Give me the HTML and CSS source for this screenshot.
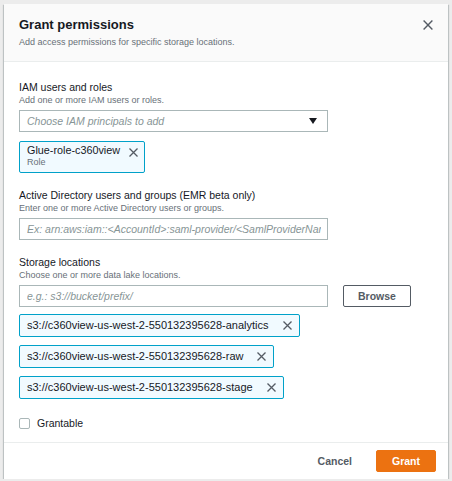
FILE: index.html
```html
<!DOCTYPE html>
<html>
<head>
<meta charset="utf-8">
<link rel="stylesheet" href="styles.css">
</head>
<body>
<div class="modal">
  <div class="modal-header">
    <div class="header-text">
      <h2 class="title">Grant permissions</h2>
      <p class="subtitle">Add access permissions for specific storage locations.</p>
    </div>
    <button class="close" aria-label="Close">
      <svg width="10" height="10" viewBox="0 0 10 10"><path d="M0.6 0.6 L9.4 9.4 M9.4 0.6 L0.6 9.4" stroke="#545b64" stroke-width="1.4" fill="none"/></svg>
    </button>
  </div>

  <div class="modal-body">
    <div class="field">
      <div class="label">IAM users and roles</div>
      <div class="desc">Add one or more IAM users or roles.</div>
      <div class="select">
        <span class="placeholder">Choose IAM principals to add</span>
        <svg class="caret" width="8" height="6" viewBox="0 0 8 6"><path d="M0 0 H8 L4 6 Z" fill="#16191f"/></svg>
      </div>
      <div class="tokens">
        <div class="token token-tall">
          <div class="token-text">
            <div class="token-name token-name-sm">Glue-role-c360view</div>
            <div class="token-sub">Role</div>
          </div>
          <svg class="token-x tall-x" width="9" height="9" viewBox="0 0 9 9"><path d="M0.5 0.5 L8.5 8.5 M8.5 0.5 L0.5 8.5" stroke="#545b64" stroke-width="1.3" fill="none"/></svg>
        </div>
      </div>
    </div>

    <div class="field">
      <div class="label">Active Directory users and groups (EMR beta only)</div>
      <div class="desc">Enter one or more Active Directory users or groups.</div>
      <input class="input" type="text" placeholder="Ex: arn:aws:iam::<AccountId>:saml-provider/<SamlProviderName>">
    </div>

    <div class="field">
      <div class="label">Storage locations</div>
      <div class="desc">Choose one or more data lake locations.</div>
      <div class="input-row">
        <input class="input" type="text" placeholder="e.g.: s3://bucket/prefix/">
        <button class="btn-browse">Browse</button>
      </div>
      <div class="tokens tokens-list">
        <div class="token">
          <span class="token-name">s3://c360view-us-west-2-550132395628-analytics</span>
          <svg class="token-x" width="9" height="9" viewBox="0 0 9 9"><path d="M0.5 0.5 L8.5 8.5 M8.5 0.5 L0.5 8.5" stroke="#545b64" stroke-width="1.3" fill="none"/></svg>
        </div>
        <div class="token">
          <span class="token-name">s3://c360view-us-west-2-550132395628-raw</span>
          <svg class="token-x" width="9" height="9" viewBox="0 0 9 9"><path d="M0.5 0.5 L8.5 8.5 M8.5 0.5 L0.5 8.5" stroke="#545b64" stroke-width="1.3" fill="none"/></svg>
        </div>
        <div class="token">
          <span class="token-name">s3://c360view-us-west-2-550132395628-stage</span>
          <svg class="token-x" width="9" height="9" viewBox="0 0 9 9"><path d="M0.5 0.5 L8.5 8.5 M8.5 0.5 L0.5 8.5" stroke="#545b64" stroke-width="1.3" fill="none"/></svg>
        </div>
      </div>
    </div>

    <label class="check-row">
      <span class="checkbox"></span>
      <span class="check-label">Grantable</span>
    </label>
  </div>

  <div class="modal-footer">
    <button class="btn-cancel">Cancel</button>
    <button class="btn-primary">Grant</button>
  </div>
</div>
</body>
</html>
```

FILE: styles.css
```css
* { box-sizing: border-box; }

html, body {
  margin: 0;
  padding: 0;
}

body {
  background: #ececec;
  padding: 4px 0 0 4px;
  font-family: "Liberation Sans", Arial, sans-serif;
  color: #16191f;
}

.modal {
  width: 444px;
  background: #ffffff;
  box-shadow: 0 1px 1px 0 rgba(0, 28, 36, 0.3), 1px 1px 1px 0 rgba(0, 28, 36, 0.15), -1px 1px 1px 0 rgba(0, 28, 36, 0.15);
}

.modal-header {
  display: flex;
  justify-content: space-between;
  align-items: flex-start;
  height: 58px;
  padding: 13px 15px 0 15px;
  background: #fafafa;
  border-bottom: 1px solid #eaeded;
}

.title {
  margin: 0 0 3px 0;
  font-size: 13px;
  line-height: 16px;
  font-weight: 700;
  color: #16191f;
}

.subtitle {
  margin: 0;
  font-size: 9px;
  line-height: 12px;
  color: #687078;
}

.close {
  margin-top: 3px;
  padding: 0;
  border: 0;
  background: none;
  width: 10px;
  height: 10px;
  display: flex;
}

.modal-body {
  padding: 19px 15px 12px 15px;
}

.field + .field {
  margin-top: 16px;
}

.label {
  font-size: 10.5px;
  line-height: 13px;
  color: #16191f;
}

.desc {
  font-size: 9px;
  line-height: 12px;
  color: #687078;
}

.select {
  margin-top: 4px;
  width: 309px;
  height: 22px;
  border: 1px solid #aab7b8;
  display: flex;
  align-items: center;
  justify-content: space-between;
  padding: 0 10px 0 7px;
}

.placeholder {
  font-size: 10.5px;
  font-style: italic;
  color: #879596;
}

.input {
  display: block;
  margin-top: 4px;
  width: 309px;
  height: 22px;
  border: 1px solid #aab7b8;
  border-radius: 0;
  padding: 0 6px 0 7px;
  font-family: "Liberation Sans", Arial, sans-serif;
  font-size: 10.5px;
  color: #16191f;
  background: #fff;
  outline: none;
}

.input::placeholder {
  font-style: italic;
  color: #879596;
  opacity: 1;
}

.input-row {
  display: flex;
  align-items: flex-start;
  gap: 15px;
}

.btn-browse {
  margin-top: 4px;
  height: 22px;
  width: 68px;
  padding: 0;
  border: 1px solid #545b64;
  border-radius: 2px;
  background: #fff;
  font-family: "Liberation Sans", Arial, sans-serif;
  font-size: 10.5px;
  font-weight: 700;
  color: #545b64;
}

.tokens {
  margin-top: 9px;
  display: flex;
  flex-direction: column;
  align-items: flex-start;
  gap: 8px;
}

.tokens-list {
  margin-top: 7px;
}

.token {
  display: flex;
  align-items: center;
  height: 23px;
  padding: 0 7px 0 7px;
  background: #f1faff;
  border: 1px solid #00a1c9;
  border-radius: 2px;
  gap: 14px;
}

.token-tall {
  height: auto;
  align-items: flex-start;
  padding: 2px 6px 4px 7px;
  gap: 9px;
}

.token-name {
  font-size: 11px;
  line-height: 13px;
  color: #16191f;
  white-space: nowrap;
}

.token-name-sm {
  font-size: 10.8px;
}

.token-sub {
  font-size: 9px;
  line-height: 11px;
  color: #687078;
}

.token-x {
  flex: none;
}

.tall-x {
  margin-top: 4px;
}

.check-row {
  margin-top: 18px;
  display: flex;
  align-items: center;
  gap: 7px;
  height: 13px;
}

.checkbox {
  width: 11px;
  height: 11px;
  border: 1px solid #aab7b8;
  border-radius: 2px;
  background: #fff;
}

.check-label {
  font-size: 10.5px;
  line-height: 13px;
  color: #16191f;
}

.modal-footer {
  display: flex;
  justify-content: flex-end;
  align-items: center;
  gap: 24px;
  height: 37px;
  padding: 0 12px 1px 0;
  border-top: 1px solid #eaeded;
}

.btn-cancel {
  padding: 0;
  border: 0;
  background: none;
  font-family: "Liberation Sans", Arial, sans-serif;
  font-size: 10.5px;
  font-weight: 700;
  color: #545b64;
}

.btn-primary {
  height: 22px;
  width: 60px;
  padding: 0;
  border: 1px solid #ec7211;
  border-radius: 2px;
  background: #ec7211;
  font-family: "Liberation Sans", Arial, sans-serif;
  font-size: 10.5px;
  font-weight: 700;
  color: #ffffff;
}
```
